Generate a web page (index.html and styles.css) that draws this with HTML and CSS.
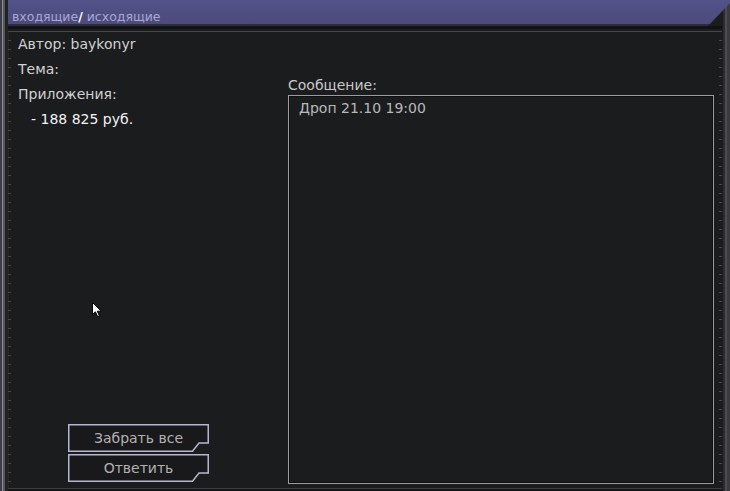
FILE: index.html
```html
<!DOCTYPE html>
<html lang="ru">
<head>
<meta charset="utf-8">
<title>Почта</title>
<link rel="stylesheet" href="styles.css">
</head>
<body>
<div class="window">
  <div class="titlebar"><span class="tab-in">входящие</span><span class="slash">/</span> <span class="tab-out">исходящие</span></div>
  <div class="rule"></div>
  <div class="content">
    <div class="meta">
      <div class="row">Автор: baykonyr</div>
      <div class="row">Тема:</div>
      <div class="row">Приложения:</div>
      <div class="row item">- 188 825 руб.</div>
      <div class="actions">
        <button class="btn" type="button">
          <svg class="btn-frame" width="141" height="28" viewBox="0 0 141 28"><polygon points="0.75,0.75 140.25,0.75 140.25,19 131,19 124.5,27.25 0.75,27.25" /></svg>
          <span class="btn-label">Забрать все</span>
        </button>
        <button class="btn" type="button">
          <svg class="btn-frame" width="141" height="28" viewBox="0 0 141 28"><polygon points="0.75,0.75 140.25,0.75 140.25,19 131,19 124.5,27.25 0.75,27.25" /></svg>
          <span class="btn-label">Ответить</span>
        </button>
      </div>
    </div>
    <div class="message">
      <div class="label">Сообщение:</div>
      <div class="msgbox">Дроп 21.10 19:00</div>
    </div>
  </div>
  <div class="footer"></div>
  <svg class="cursor" width="11" height="16" viewBox="0 0 11 16"><path d="M0.5 0.5 V12.5 L3.4 9.8 L5.6 14.6 L7.4 13.8 L5.3 9.2 H9.2 Z" /></svg>
</div>
</body>
</html>
```
FILE: styles.css
```css
* { box-sizing: border-box; }
html, body { margin: 0; padding: 0; }
body {
  width: 730px;
  height: 491px;
  overflow: hidden;
  background: #1b1c1e;
  font-family: "DejaVu Sans", "Liberation Sans", sans-serif;
  font-size: 14px;
}
.window {
  position: relative;
  height: 491px;
  display: flex;
  flex-direction: column;
  background:
    linear-gradient(to right, #3d3d43 0 2px, #8c8c98 2px 3px, #56565e 3px 5px, #222225 5px 8px) left top / 8px 100% no-repeat,
    linear-gradient(to right, #1b1c1e 0 1px, #2b2b2f 1px 3px, #4c4c52 3px 5px, #3a3a3f 5px 8px) right top / 8px 100% no-repeat,
    #1b1c1e;
}
.titlebar {
  margin-left: 8px;
  height: 26px;
  flex: none;
  background: linear-gradient(#53528a, #4c4b7a);
  border-bottom: 2px solid #2c2b42;
  clip-path: polygon(0 0, 100% 0, 100% 3px, calc(100% - 22px) 100%, 0 100%);
  padding: 8px 0 0 4px;
  color: #a8a7d6;
  font-size: 12.5px;
  line-height: 17px;
  white-space: nowrap;
}
.slash { color: #ffffff; font-weight: bold; }
.rule {
  flex: none;
  height: 6px;
  margin: 0 8px;
  background: linear-gradient(#121214 0 3px, transparent 3px);
  border-bottom: 1px solid #46464c;
}
.content {
  flex: 1;
  display: flex;
  margin: 0 8px;
  background:
    repeating-linear-gradient(to bottom, transparent 0 8px, #48484e 8px 9px) left top / 3px 100% no-repeat,
    repeating-linear-gradient(to bottom, transparent 0 8px, #48484e 8px 9px) right top / 3px 100% no-repeat,
    linear-gradient(#26262a, #26262a) left top / 1px 100% no-repeat;
}
.meta {
  width: 280px;
  flex: none;
  display: flex;
  flex-direction: column;
  padding: 0 0 6px 10px;
}
.row {
  line-height: 25px;
  color: #d2d2d2;
}
.item {
  padding-left: 13px;
  color: #f3f3f3;
}
.actions {
  margin-top: auto;
  margin-left: 50px;
  display: flex;
  flex-direction: column;
  gap: 2px;
}
.btn {
  position: relative;
  width: 141px;
  height: 28px;
  padding: 0;
  border: none;
  background: transparent;
  color: #b2b2b2;
  font: inherit;
  cursor: default;
}
.btn-frame {
  position: absolute;
  left: 0;
  top: 0;
}
.btn-frame polygon {
  fill: #19191b;
  stroke: #b6b6d0;
  stroke-width: 1.5;
}
.btn-label {
  position: relative;
  line-height: 28px;
}
.message {
  flex: 1;
  display: flex;
  flex-direction: column;
  padding: 44px 8px 4px 0;
}
.label {
  line-height: 18px;
  color: #c9c9c9;
  margin-bottom: 1px;
}
.msgbox {
  flex: 1;
  border: 1px solid #9c9c9e;
  box-shadow: inset 0 0 0 1px #0f0f11;
  padding: 3px 10px;
  line-height: 18px;
  color: #b9b9b9;
}
.footer {
  flex: none;
  height: 3px;
  margin: 0 8px;
  border-top: 1px solid #3c3c42;
  background: #141416;
}
.cursor {
  position: absolute;
  left: 92px;
  top: 302px;
}
.cursor path {
  fill: #ffffff;
  stroke: #000000;
  stroke-width: 1;
}
```
